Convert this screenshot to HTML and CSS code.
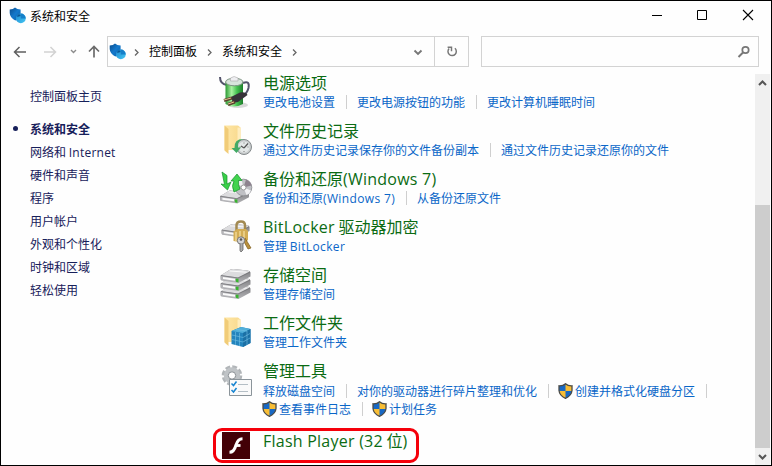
FILE: index.html
```
<!DOCTYPE html>
<html lang="zh-CN">
<head>
<meta charset="utf-8">
<title>系统和安全</title>
<link rel="stylesheet" href="styles.css">
</head>
<body>
<svg class="defs" width="0" height="0">
  <defs>
    <linearGradient id="blueShield" x1="0" y1="0" x2="1" y2="1"><stop offset="0" stop-color="#0a4c8c"/><stop offset=".5" stop-color="#1479cc"/><stop offset="1" stop-color="#075ba6"/></linearGradient>
    <linearGradient id="ball" x1="0" y1="0" x2="1" y2="1"><stop offset="0" stop-color="#1c86cf"/><stop offset="1" stop-color="#45c8f4"/></linearGradient>
    <linearGradient id="folder" x1="0" y1="0" x2="1" y2="0"><stop offset="0" stop-color="#ffe7a6"/><stop offset="1" stop-color="#f8d98d"/></linearGradient>
    <linearGradient id="battery" x1="0" y1="0" x2="1" y2="0"><stop offset="0" stop-color="#2c9a35"/><stop offset=".35" stop-color="#a8f2a0"/><stop offset=".65" stop-color="#45c251"/><stop offset="1" stop-color="#1d7e2b"/></linearGradient>
    <linearGradient id="driveSide" x1="0" y1="0" x2="0" y2="1"><stop offset="0" stop-color="#77777a"/><stop offset="1" stop-color="#b5b5b8"/></linearGradient>
    <symbol id="security" viewBox="0 0 17 17">
      <path d="M.7 2.500Q4.300 2.500 6 .6Q8 2.500 11.600 2.500V7Q11 11.500 6.300 13.500Q1 11 .7 6Z" fill="url(#blueShield)"/>
      <circle cx="11.800" cy="11.400" r="4.900" fill="url(#ball)"/>
      <path d="M11.800 11.400V6.500A4.900 4.900 0 0 1 16.700 11.400Z" fill="#1580c9"/>
      <path d="M8.500 8Q11 6.300 11.600 9L8.200 10Z" fill="#0b5797"/>
    </symbol>
    <symbol id="uac" viewBox="0 0 15 16">
      <path d="M1 2.800Q5 3 7.500.8Q10 3 14 2.800V7.500Q13.500 12.700 7.500 15.300Q1.500 12.700 1 7.500Z" fill="#f8bd34"/>
      <path d="M7.500.8V8H1V2.800Q5 3 7.500.8ZM7.500 8H14Q13.300 12.900 7.500 15.300Z" fill="#1768c4"/>
      <path d="M1 2.800Q5 3 7.500.8Q10 3 14 2.800V7.500Q13.500 12.700 7.500 15.300Q1.500 12.700 1 7.500Z" fill="none" stroke="#4b4b48" stroke-width="1.300"/>
    </symbol>
    <symbol id="drive" viewBox="0 0 32 16">
      <path d="M1 7.500L10 2Q12 1 14 1.100L28 2.500Q31 2.800 31 4.500V8.500L19 15L2 12.500Q1 12 1 11Z" fill="url(#driveSide)"/>
      <path d="M1.500 7.300L10 2Q12 1 14 1.100L28 2.500Q31 3 29.500 4L18.500 9.500Z" fill="#dcdcde"/>
      <path d="M10 3L27 4.200" stroke="#fafafa"/>
      <path d="M1.500 7.800L18.200 10V14.300L2.500 12Q1.500 11.700 1.500 10.500Z" fill="#b5b5b9"/>
      <path d="M3.500 9L15.500 10.700V12.700L3.500 11Z" fill="#fafafa"/>
      <path d="M16.300 10.500L19 10.800V14.500L16.300 13.800Z" fill="#39b52f"/>
      <path d="M1.500 7.500L18.500 10L30.500 4" fill="none" stroke="#707074" stroke-width=".7"/>
    </symbol>
    <symbol id="folderShape" viewBox="0 0 34 34">
      <path d="M5.500 2.500H19L21.500 4.500V27H5.500Z" fill="url(#folder)"/>
      <path d="M5.500 2.500L9.500 6V31L5.500 27.500Z" fill="#f1cc78"/>
      <path d="M18.500 4.500H21.500V27H18.500Z" fill="#ffedbd"/>
    </symbol>
  </defs>
</svg>
<div class="window">
  <header class="titlebar">
    <svg class="app-icon" width="17" height="17"><use href="#security"/></svg>
    <span class="caption">系统和安全</span>
    <div class="controls">
      <svg width="46" height="28" viewBox="0 0 46 28"><path d="M19 14.500H29" stroke="#000"/></svg>
      <svg width="46" height="28" viewBox="0 0 46 28"><path d="M18.500 9.500H27.500V18.500H18.500Z" fill="none" stroke="#000"/></svg>
      <svg width="46" height="28" viewBox="0 0 46 28"><path d="M18 9L28 19M28 9L18 19" stroke="#000" stroke-width="1.100"/></svg>
    </div>
  </header>
  <nav class="toolbar">
    <svg class="nav-icons" width="106" height="31" viewBox="0 0 106 31" fill="none">
      <path d="M25 16H14M18.500 11L13.500 16L18.500 21" stroke="#5f5f5f" stroke-width="1.500"/>
      <path d="M43 16H54M49.500 11L54.500 16L49.500 21" stroke="#d2d2d2" stroke-width="1.500"/>
      <path d="M70 14L72.500 16.500L75 14" stroke="#8c8c8c" stroke-width="1.400"/>
      <path d="M93 21.500V11M88 15.500L93 10.500L98 15.500" stroke="#6b6b6b" stroke-width="1.700"/>
    </svg>
    <div class="address">
      <svg class="address-icon" width="17" height="17"><use href="#security"/></svg>
      <svg class="crumb-arrow" width="7" height="9" viewBox="0 0 7 9"><path d="M2 1.500L5 4.500L2 7.500" fill="none" stroke="#666" stroke-width="1.300"/></svg>
      <span>控制面板</span>
      <svg class="crumb-arrow" width="7" height="9" viewBox="0 0 7 9"><path d="M2 1.500L5 4.500L2 7.500" fill="none" stroke="#666" stroke-width="1.300"/></svg>
      <span>系统和安全</span>
      <svg class="crumb-arrow" width="7" height="9" viewBox="0 0 7 9"><path d="M2 1.500L5 4.500L2 7.500" fill="none" stroke="#666" stroke-width="1.300"/></svg>
      <svg class="dropdown" width="33" height="29" viewBox="0 0 33 29"><path d="M13.500 13.500L17 17L20.500 13.500" fill="none" stroke="#777" stroke-width="1.900"/></svg>
      <svg class="refresh" width="34" height="29" viewBox="0 0 34 29" fill="none" stroke="#777" stroke-width="1.500"><path d="M20.500 11.200A4.300 4.300 0 1 1 14.500 11.500M13 10.200H17V14.200"/></svg>
    </div>
    <div class="search">
      <svg width="14" height="14" viewBox="0 0 14 14" fill="none" stroke="#777"><circle cx="9.500" cy="5" r="3.200" stroke-width="1.700"/><path d="M7 7.500L2.500 12" stroke-width="2"/></svg>
    </div>
  </nav>
  <div class="content">
    <aside class="sidebar">
      <a class="home">控制面板主页</a>
      <a class="current">系统和安全</a>
      <a>网络和 <span class="en">Internet</span></a>
      <a>硬件和声音</a>
      <a>程序</a>
      <a>用户帐户</a>
      <a>外观和个性化</a>
      <a>时钟和区域</a>
      <a>轻松使用</a>
    </aside>
    <main class="list">
      <section class="item">
        <svg class="icon" viewBox="0 0 34 34">
          <ellipse cx="19" cy="30" rx="10" ry="3" fill="#d9d9d9"/>
          <path d="M1 2Q1 9 8 10M24 8Q31 5 29.500 13Q28 19 23 21" fill="none" stroke="#53536b" stroke-width="2"/>
          <path d="M6.500 7V29Q14 34 24 29V7Z" fill="url(#battery)"/>
          <ellipse cx="15.300" cy="7" rx="8.700" ry="3.800" fill="#d8e4dc" stroke="#7b9181"/>
          <path d="M11.500 6V3Q15 0 19 3V6Z" fill="#eeeef1" stroke="#aaa" stroke-width=".6"/>
          <path d="M12 22L21 17.500Q27 16.500 28.500 20L19 27L14 28Z" fill="#363239"/>
          <path d="M13 23L5 25.500M16 27L9 29.500" stroke="#5d3f2f" stroke-width="3"/><path d="M12 23L5 25M15 27L9 29" stroke="#e0c48f" stroke-width="1"/>
        </svg>
        <div class="body"><h2>电源选项</h2><div class="links"><a>更改电池设置</a><i></i><a>更改电源按钮的功能</a><i></i><a>更改计算机睡眠时间</a></div></div>
      </section>
      <section class="item">
        <svg class="icon" viewBox="0 0 34 34">
          <use href="#folderShape" width="34" height="34"/>
          <circle cx="25" cy="24" r="7.500" fill="#c9cdce" stroke="#858a8c"/><circle cx="25" cy="24" r="5.500" fill="#e3e7e7"/>
          <path d="M25 25L29 20.500M25 25L22 23" stroke="#555" stroke-width="1.200"/><path d="M25 19.500V20.500M25 28V29M20.500 24H21.500M28.500 24H29.500" stroke="#777"/>
          <path d="M25 16Q18 17 19 24.500H22L17.500 30L12.500 25H15.500Q15 15.500 25 16Z" fill="#42aa65"/>
        </svg>
        <div class="body"><h2>文件历史记录</h2><div class="links"><a>通过文件历史记录保存你的文件备份副本</a><i></i><a>通过文件历史记录还原你的文件</a></div></div>
      </section>
      <section class="item">
        <svg class="icon" viewBox="0 0 34 34">
          <use href="#drive" x="0" y="18" width="31" height="15.500"/>
          <circle cx="24.500" cy="16.500" r="8.300" fill="#bfc0c4" stroke="#96979b"/><path d="M24.500 16.500L17.500 12.500Q19 9.500 22.500 8.500ZM24.500 16.500L32 19.500Q30 23.500 27.500 24Z" fill="#f1f1f3"/><path d="M24.500 16.500L27 8.500Q32 10.500 32.500 14.500Z" fill="#8d828e"/><circle cx="24.500" cy="16.500" r="2.500" fill="#fff" stroke="#999"/>
          <path d="M3 1L8 4.500V13L12 11L8.500 19L2 13L5.500 13.500Z" fill="#38d047" stroke="#17902d" stroke-width=".7"/>
          <path d="M18 3L23 9.500L19.500 9.500Q19 14 21 18L15 21Q12 15 15 10L12 10Z" fill="#42d44f" stroke="#17902d" stroke-width=".7"/>
        </svg>
        <div class="body"><h2>备份和还原<span class="en">(Windows 7)</span></h2><div class="links"><a>备份和还原<span class="en wide">(Windows 7)</span></a><i></i><a>从备份还原文件</a></div></div>
      </section>
      <section class="item">
        <svg class="icon" viewBox="0 0 34 34">
          <use href="#drive" x="0" y="4" width="33" height="15"/>
          <path d="M17.500 13V6.500Q17.500 2.500 22 2.500Q26 2.500 26 6.500V13" fill="none" stroke="#a28a52" stroke-width="2.500"/>
          <path d="M14.500 12.500L18 10H27L29 12V21L26 24L14.500 22Z" fill="#d3ad55"/><path d="M17 13V22M21 12V22M25 12V22" stroke="#f7e2a3" stroke-width="1.200"/>
          <path d="M26 19L32 29L29 30L24 21" fill="#b9903c" stroke="#7d5b1b" stroke-width=".7"/>
          <circle cx="22" cy="21.500" r="3.700" fill="#d5d5d6" stroke="#777"/><circle cx="22" cy="20.500" r="1.300" fill="#555"/><path d="M21 24.500V31.500L22 33L24 31V24.500" fill="#aaa" stroke="#666" stroke-width=".8"/>
        </svg>
        <div class="body"><h2><span class="en">BitLocker</span> 驱动器加密</h2><div class="links"><a>管理 <span class="en wide">BitLocker</span></a></div></div>
      </section>
      <section class="item">
        <svg class="icon" viewBox="0 0 34 34">
          <use href="#drive" x="0" y="17" width="33" height="16"/><use href="#drive" x="0" y="9" width="33" height="16"/><use href="#drive" x="0" y="1" width="33" height="16"/>
        </svg>
        <div class="body"><h2>存储空间</h2><div class="links"><a>管理存储空间</a></div></div>
      </section>
      <section class="item">
        <svg class="icon" viewBox="0 0 34 34">
          <use href="#folderShape" width="34" height="34"/>
          <path d="M12.500 16L22 12L31.500 14V28L24 32L12.500 29Z" fill="#2384bd"/><path d="M12.500 16L22 12L31.500 14L24 18Z" fill="#51afd9"/><path d="M24 18L31.500 14V28L24 32Z" fill="#1b70a5"/>
          <path d="M13 20L24 22.500L31 18.500M13 24.500L24 27L31 23M16.500 17V30M20.500 18V31M28 16V30M17 14.500L28 16" fill="none" stroke="#73c1e4" stroke-width=".6"/>
        </svg>
        <div class="body"><h2>工作文件夹</h2><div class="links"><a>管理工作文件夹</a></div></div>
      </section>
      <section class="item tools">
        <svg class="icon" viewBox="0 0 34 34">
          <circle cx="13" cy="12.500" r="8.300" fill="none" stroke="#b1b5b8" stroke-width="4" stroke-dasharray="4.500 2.020"/>
          <circle cx="13" cy="12.500" r="6" fill="none" stroke="#bfc3c6" stroke-width="4.500"/><circle cx="13" cy="12.500" r="3.700" fill="#fff" stroke="#858b90"/>
          <path d="M10.500 16.500H32.500V32.500H10.500Z" fill="#fafafa" stroke="#8b949a"/>
          <path d="M12.500 20.500L14.500 22.500L17.500 18.500M12.500 27L14.500 29L17.500 25" fill="none" stroke="#1784d1" stroke-width="1.500"/><path d="M19 21.500H29M19 28.500H29" stroke="#b4bec5"/>
        </svg>
        <div class="body"><h2>管理工具</h2><div class="links"><a>释放磁盘空间</a><i></i><a>对你的驱动器进行碎片整理和优化</a><i class="before-shield"></i><svg class="shield" width="15" height="16"><use href="#uac"/></svg><a>创建并格式化硬盘分区</a><i></i></div>
        <div class="links"><svg class="shield first" width="15" height="16"><use href="#uac"/></svg><a>查看事件日志</a><i class="before-shield"></i><svg class="shield" width="15" height="16"><use href="#uac"/></svg><a>计划任务</a></div></div>
      </section>
      <section class="item flash">
        <svg class="flash-icon" width="28" height="27" viewBox="0 0 28 27"><path d="M0 0H28V27H0Z" fill="#430006"/><path d="M20.500 6.800Q16 6.800 14 13Q12 20.300 7.500 20.300" fill="none" stroke="#fff" stroke-width="3"/><path d="M13.500 13.500H18.500" stroke="#fff" stroke-width="2.800"/></svg>
        <div class="body"><h2><span class="en">Flash Player (32</span> 位<span class="en">)</span></h2></div>
        <div class="highlight"></div>
      </section>
    </main>
    <div class="scrollbar">
      <svg width="15" height="17" viewBox="0 0 15 17"><path d="M4 11L7.500 7.500L11 11" fill="none" stroke="#555" stroke-width="2"/></svg>
      <div class="thumb"></div>
      <svg width="15" height="17" viewBox="0 0 15 17"><path d="M4 7L7.500 10.500L11 7" fill="none" stroke="#555" stroke-width="2"/></svg>
    </div>
  </div>
</div>
</body>
</html>
```
FILE: styles.css
```
* { box-sizing: border-box; }
body { margin: 0; overflow: hidden; font: 12px "Noto Sans CJK SC", sans-serif; }
svg { flex: none; display: block; }
.defs { position: absolute; }
.en { font-family: "Open Sans", sans-serif; letter-spacing: .24px; line-height: 1; }
.wide { letter-spacing: .36px; }
.window { width: 772px; height: 466px; border: 1px solid #000; background: #fefefe; display: flex; flex-direction: column; overflow: hidden; }
.titlebar { height: 35px; display: flex; padding-left: 8px; }
.app-icon { margin-top: 6px; }
.caption { margin-left: 4px; line-height: 29px; }
.controls { display: flex; margin-left: auto; }
.toolbar { height: 31px; display: flex; }
.address { width: 362px; border: 1px solid #d3d3d3; display: flex; align-items: center; white-space: nowrap; line-height: 26px; }
.address span { padding-bottom: 2px; }
.address-icon { margin-left: 1px; }
.crumb-arrow { margin: 1px 9px 0 7px; }
.address span + .crumb-arrow { margin: 1px 9px 0; }
.address .dropdown { margin-left: auto; }
.refresh { border-left: 1px solid #d3d3d3; }
.search { width: 278px; margin-left: 12px; border: 1px solid #d3d3d3; display: flex; align-items: center; justify-content: flex-end; padding-right: 8px; }
.content { flex: 1; display: flex; margin-top: 7px; min-height: 0; }
.sidebar { width: 218px; padding: 10px 0 0 29px; display: flex; flex-direction: column; color: #17205a; line-height: 23px; }
.sidebar a { height: 23px; }
.home { margin-bottom: 10px; }
.current { font-weight: 700; display: flex; align-items: center; }
.current::before { content: ""; width: 5px; height: 5px; border-radius: 50%; background: #17205a; margin: 0 12px 0 -17px; }
.list { flex: 1; min-width: 0; }
.item { height: 48px; display: flex; }
.icon { width: 34px; height: 34px; margin-top: 1px; }
.body { margin-left: 10px; margin-top: -2px; white-space: nowrap; }
h2 { margin: 0; font-size: 16px; font-weight: 400; height: 21px; line-height: 20px; color: #0b6b13; }
.links { display: flex; align-items: center; height: 18px; line-height: 18px; color: #0a66c8; }
.links i { width: 1px; height: 14px; margin: 0 10px 0 11px; background: #cfcfcf; }
.links .before-shield { margin-right: 9px; }
.shield { margin-right: 2px; }
.shield.first { margin-left: -1px; }
.tools { height: 70px; }
.tools h2 { height: 22px; }
.flash { position: relative; height: 34px; }
.flash-icon { margin: 0 3px; }
.highlight { position: absolute; left: -6px; top: -4px; width: 206px; height: 35px; border: 3px solid #f5000a; border-radius: 9px; }
.scrollbar { width: 15px; margin-right: 1px; background: #f0f0f0; display: flex; flex-direction: column; }
.thumb { margin-top: 114px; flex: 1; background: #cdcdcd; }
```
